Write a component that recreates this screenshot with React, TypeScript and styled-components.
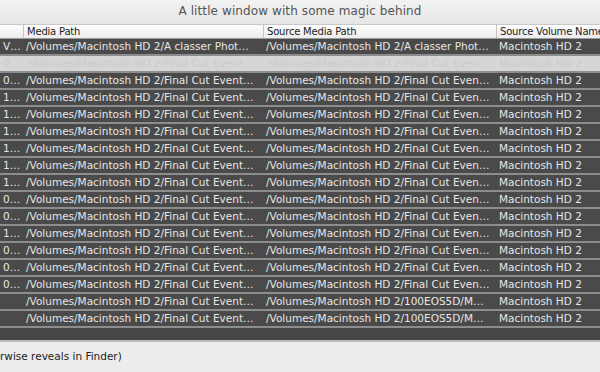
import React from "react";
import styled, { createGlobalStyle } from "styled-components";

const Global = createGlobalStyle`
  html, body { margin: 0; padding: 0; background: #ececec; }
  body { width: 600px; height: 372px; overflow: hidden; font-family: "DejaVu Sans", "Liberation Sans", sans-serif; }
`;

const Window = styled.div`
  width: 600px;
  height: 372px;
  display: flex;
  flex-direction: column;
  background: #ececec;
  overflow: hidden;
`;

const TitleBar = styled.div`
  height: 24px;
  flex: 0 0 24px;
  display: flex;
  align-items: center;
  justify-content: center;
  background: linear-gradient(#f2f2f2, #e6e6e6);
  color: #555;
  font-size: 12px;
  letter-spacing: 0.1px;
  padding-bottom: 3px;
  box-sizing: border-box;
`;

const Cols = "23px 240px 233px 1fr";

const HeaderRow = styled.div`
  display: grid;
  grid-template-columns: ${Cols};
  height: 15px;
  flex: 0 0 15px;
  background: linear-gradient(#fdfdfd, #ededed);
  border-top: 1px solid #c8c8c8;
  border-bottom: 1px solid #9a9a9a;
  box-sizing: border-box;
`;

const HeaderCell = styled.div<{ $sep?: boolean }>`
  font-size: 10px;
  line-height: 13px;
  letter-spacing: -0.2px;
  color: #222;
  padding-left: 3px;
  white-space: nowrap;
  overflow: hidden;
  border-left: ${(p) => (p.$sep ? "1px solid #c4c4c4" : "none")};
`;

const Body = styled.div`
  flex: 0 0 303px;
  background: #474747;
  border-bottom: 2px solid #bdbdbd;
  box-sizing: border-box;
`;

const Row = styled.div<{ $selected?: boolean }>`
  display: grid;
  grid-template-columns: ${Cols};
  height: 17px;
  box-sizing: border-box;
  background: ${(p) => (p.$selected ? "#d6d6d6" : "#4a4a4a")};
  border-bottom: 2px solid #8d8d8d;
`;

const Cell = styled.div<{ $selected?: boolean }>`
  font-size: 10.5px;
  line-height: 15px;
  color: ${(p) => (p.$selected ? "#cbcbcb" : "#e6e6e6")};
  padding-left: 3px;
  white-space: nowrap;
  overflow: hidden;
`;

const Footer = styled.div`
  flex: 1;
  display: flex;
  align-items: center;
  font-size: 10.5px;
  color: #222;
  padding-left: 0;
  padding-bottom: 2px;
`;

type R = { a: string; b: string; c: string; d: string; sel?: boolean };

const FC = "/Volumes/Macintosh HD 2/Final Cut Event…";
const FC3 = "/Volumes/Macintosh HD 2/Final Cut Even…";
const AC = "/Volumes/Macintosh HD 2/A classer Phot…";
const EOS = "/Volumes/Macintosh HD 2/100EOS5D/M…";
const MHD = "Macintosh HD 2";

const rows: R[] = [
  { a: "V…", b: AC, c: AC, d: MHD },
  { a: "0…", b: FC, c: FC3, d: MHD, sel: true },
  { a: "0…", b: FC, c: FC3, d: MHD },
  { a: "1…", b: FC, c: FC3, d: MHD },
  { a: "1…", b: FC, c: FC3, d: MHD },
  { a: "1…", b: FC, c: FC3, d: MHD },
  { a: "1…", b: FC, c: FC3, d: MHD },
  { a: "1…", b: FC, c: FC3, d: MHD },
  { a: "1…", b: FC, c: FC3, d: MHD },
  { a: "0…", b: FC, c: FC3, d: MHD },
  { a: "0…", b: FC, c: FC3, d: MHD },
  { a: "1…", b: FC, c: FC3, d: MHD },
  { a: "0…", b: FC, c: FC3, d: MHD },
  { a: "0…", b: FC, c: FC3, d: MHD },
  { a: "0…", b: FC, c: FC3, d: MHD },
  { a: "", b: FC, c: EOS, d: MHD },
  { a: "", b: FC, c: EOS, d: MHD },
];

export default function App() {
  return (
    <Window>
      <Global />
      <TitleBar>A little window with some magic behind</TitleBar>
      <HeaderRow>
        <HeaderCell />
        <HeaderCell $sep>Media Path</HeaderCell>
        <HeaderCell $sep>Source Media Path</HeaderCell>
        <HeaderCell $sep>Source Volume Name</HeaderCell>
      </HeaderRow>
      <Body>
        {rows.map((r, i) => (
          <Row key={i} $selected={r.sel}>
            <Cell $selected={r.sel}>{r.a}</Cell>
            <Cell $selected={r.sel}>{r.b}</Cell>
            <Cell $selected={r.sel}>{r.c}</Cell>
            <Cell $selected={r.sel}>{r.d}</Cell>
          </Row>
        ))}
      </Body>
      <Footer>rwise reveals in Finder)</Footer>
    </Window>
  );
}
